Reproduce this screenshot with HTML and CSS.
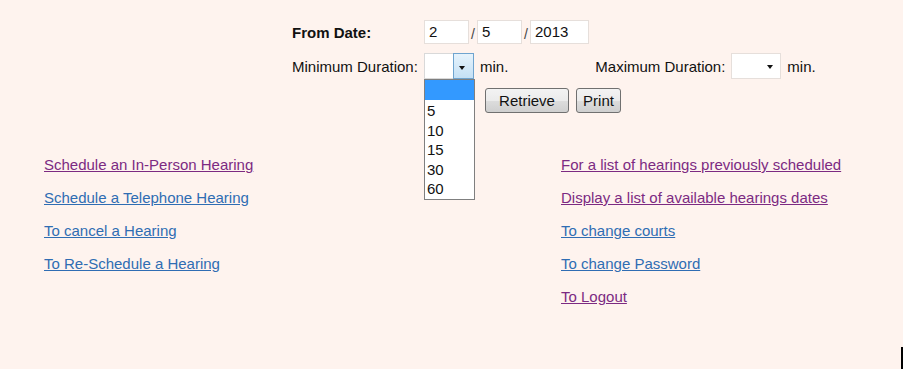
FILE: index.html
```html
<!DOCTYPE html>
<html lang="en">
<head>
  <meta charset="UTF-8">
  <title>Hearings</title>
  <link rel="stylesheet" href="styles.css">
</head>
<body>
  <div class="search">
    <div class="row row-date">
      <span class="label bold">From Date:</span>
      <span class="field month">2</span>
      <span class="sep">/</span>
      <span class="field day">5</span>
      <span class="sep">/</span>
      <span class="field year">2013</span>
    </div>

    <div class="row row-duration">
      <span class="label">Minimum Duration:</span>
      <div class="select open">
        <span class="arrow"></span>
        <ul class="options">
          <li class="selected">&nbsp;</li>
          <li>5</li>
          <li>10</li>
          <li>15</li>
          <li>30</li>
          <li>60</li>
        </ul>
      </div>
      <span class="unit">min.</span>
      <span class="label label-max">Maximum Duration:</span>
      <div class="select">
        <span class="arrow"></span>
      </div>
      <span class="unit">min.</span>
    </div>

    <div class="row row-buttons">
      <button class="btn btn-retrieve">Retrieve</button>
      <button class="btn btn-print">Print</button>
    </div>
  </div>

  <div class="links">
    <ul class="link-list">
      <li><a href="#" class="visited">Schedule an In-Person Hearing</a></li>
      <li><a href="#">Schedule a Telephone Hearing</a></li>
      <li><a href="#">To cancel a Hearing</a></li>
      <li><a href="#">To Re-Schedule a Hearing</a></li>
    </ul>
    <ul class="link-list">
      <li><a href="#" class="visited">For a list of hearings previously scheduled</a></li>
      <li><a href="#" class="visited">Display a list of available hearings dates</a></li>
      <li><a href="#">To change courts</a></li>
      <li><a href="#">To change Password</a></li>
      <li><a href="#" class="visited">To Logout</a></li>
    </ul>
  </div>

  <div class="edge"></div>
</body>
</html>
```

FILE: styles.css
```css
body {
  margin: 0;
  height: 369px;
  background-color: #fef3ee;
  font-family: "Liberation Sans", Arial, sans-serif;
  font-size: 15px;
  color: #111;
  position: relative;
  overflow: hidden;
}

.search {
  padding: 20px 0 0 292px;
}

.row {
  display: flex;
  align-items: center;
}

.row-date {
  height: 24px;
  margin-bottom: 9px;
}

.row-duration {
  height: 26px;
  margin-bottom: 9px;
}

.row-buttons {
  height: 25px;
  padding-left: 193px;
}

.label {
  width: 132px;
}

.bold {
  font-weight: bold;
}

.label-max {
  width: 136px;
  margin-left: 87px;
}

.field {
  box-sizing: border-box;
  height: 24px;
  line-height: 22px;
  padding-left: 4px;
  background: #fff;
  border: 1px solid #e6dfdb;
}

.month, .day {
  width: 45px;
}

.year {
  width: 59px;
}

.sep {
  width: 8px;
  text-align: center;
  font-size: 14px;
  color: #444;
  padding-top: 3px;
}

.select {
  position: relative;
  box-sizing: border-box;
  width: 50px;
  height: 26px;
  background: #fff;
  border: 1px solid #e6dfdb;
}

.arrow {
  position: absolute;
  top: 0;
  right: 0;
  bottom: 0;
  width: 19px;
}

.arrow::after {
  content: "";
  position: absolute;
  left: 6px;
  top: 11px;
  border-left: 3.5px solid transparent;
  border-right: 3.5px solid transparent;
  border-top: 4px solid #111;
}

.select.open {
  border-color: #d9d9d9;
}

.select.open .arrow {
  top: -1px;
  bottom: -1px;
  right: -1px;
  width: 19px;
  border: 1px solid #6fa4cf;
  background: linear-gradient(#e6f3fc, #c4e0f5);
}

.select.open .arrow::after {
  left: 5px;
  top: 12px;
}

.options {
  position: absolute;
  left: -1px;
  top: 25px;
  width: 51px;
  height: 121px;
  box-sizing: border-box;
  margin: 0;
  padding: 0;
  list-style: none;
  background: #fff;
  border: 1px solid #7f7f7f;
  z-index: 2;
}

.options li {
  height: 19.6px;
  line-height: 19.6px;
  padding-left: 2px;
}

.options li.selected {
  height: 20px;
  background: #3399ff;
  margin-bottom: 1px;
}

.unit {
  margin-left: 6px;
}

.btn {
  box-sizing: border-box;
  height: 25px;
  padding: 0;
  font-family: "Liberation Sans", Arial, sans-serif;
  font-size: 15px;
  color: #111;
  border: 1px solid #707070;
  border-radius: 3px;
  background: linear-gradient(#f3f3f3 0%, #ebebeb 50%, #dddddd 51%, #cfcfcf 100%);
}

.btn-retrieve {
  width: 84px;
}

.btn-print {
  width: 45px;
  margin-left: 7px;
}

.links {
  display: grid;
  grid-template-columns: 517px auto;
  padding-left: 44px;
  margin-top: 43px;
}

.link-list {
  margin: 0;
  padding: 0;
  list-style: none;
}

.link-list li {
  height: 17px;
  line-height: 17px;
  margin-bottom: 16px;
}

.link-list a {
  color: #2f6db3;
}

.link-list a.visited {
  color: #7c2a82;
}

.edge {
  position: absolute;
  right: 0;
  bottom: 0;
  width: 2px;
  height: 22px;
  background: #000;
}
```
